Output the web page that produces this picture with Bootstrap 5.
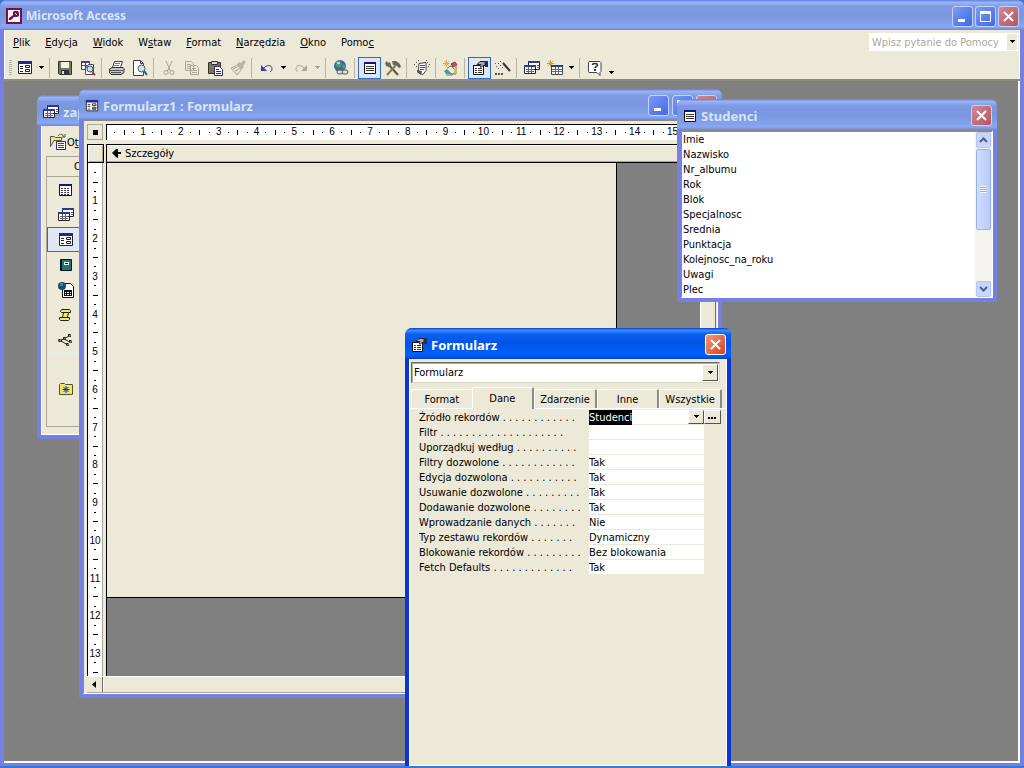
<!DOCTYPE html>
<html lang="pl">
<head>
<meta charset="utf-8">
<meta name="viewport" content="width=device-width, initial-scale=1">
<title>Microsoft Access</title>
<link href="https://cdn.jsdelivr.net/npm/bootstrap@5.3.0/dist/css/bootstrap.min.css" rel="stylesheet">
<style>
:root{--face:#ece9d8;--shade:#aca899;--desk:#808080}
body{font-family:"DejaVu Sans Condensed","DejaVu Sans",sans-serif;font-size:11px;line-height:15px;color:#000;background:#3a78d8;overflow:hidden;height:100vh}
svg{display:block;flex:none}
button,input,select{font:inherit;color:inherit;border-radius:0}
button{padding:0}
.win{background:var(--face);border:4px solid #7680e0;border-top:0;border-radius:7px 7px 0 0;box-shadow:inset 0 0 0 1px #fff}
.app{height:calc(100vh - 2px);border-bottom-width:3px}
.child{position:absolute;outline:0}
.bar{height:30px;margin:0 -4px;padding:2px 5px 0 6px;border-radius:7px 7px 0 0;color:#d8e4f8;font-family:"Noto Sans",sans-serif;font-weight:700;font-size:12px;line-height:18px;background:linear-gradient(#5f7fe0,#9bb5f4 8%,#7f9ae4 22%,#7a96df 50%,#81a1ea 78%,#8aa8f2 90%,#6f83dc)}
.bar.child-title{height:31px;font-size:13px}
.cap{width:21px;height:21px;border:1px solid #c5d3fa;border-radius:3px;background:linear-gradient(135deg,#7c9bf4,#3f6ae6)}
.cap.x{background:linear-gradient(135deg,#d08a94,#b4555f)}
.win.active{border-color:#0a35d6;box-shadow:inset 0 0 0 1px #fff}
.active .bar{color:#fff;background:linear-gradient(#0a3fd0,#3c8bff 8%,#0a5ff0 20%,#0055e5 50%,#0060fa 80%,#0058ee 92%,#0040c8)}
.active .cap.x{background:linear-gradient(135deg,#f0977c,#d8421c);border-color:#fff}
.menu{height:24px;padding:0 2px 0 9px}
.menu a{color:#000;text-decoration:none}
.menu nav{gap:15px}
.ask{height:18px;width:149px;background:#fff}
.ask input{border:0;padding:0 3px;background:#fff;min-width:0}
.ask input::placeholder{color:#aca899;opacity:1}
.ask button,.dd{border:0;background:var(--face);width:11px}
.ask button{margin:1px;width:10px}
.tools{height:27px;padding:2px 4px 0;border-bottom:2px solid #8c8a80}
.tb{width:23px;height:22px;border:1px solid transparent;background:transparent;display:flex;align-items:center;justify-content:center}
.tb.on{border-color:#316ac5;background:#dce6f4}
.dd{height:22px;display:flex;align-items:center;justify-content:center;background:transparent}
.sep{width:1px;height:20px;background:#b8b5a4;margin:0 3px 0 2px}
.grip{width:3px;height:15px;margin:0 1px;background:repeating-linear-gradient(#b5b2a2 0 1px,transparent 1px 2px)}
.mdi{background:var(--desk);border-right:2px solid #fff;border-bottom:2px solid #fff;overflow:hidden;min-height:0}
.db{left:33px;top:14px;width:400px;height:344px}
.design{left:75px;top:8px;width:643px;height:609px}
.fields{left:677px;top:99px;width:320px;height:203px}
.props{left:405px;top:328px;bottom:2px;width:326px;border-bottom:0}
.side{margin:2px 4px 8px 5px;width:120px;border:1px solid var(--shade)}
.side .hd{height:20px;border-bottom:1px solid var(--shade);padding-left:27px}
.side button{height:25px;width:100%;border:1px solid transparent;background:transparent;padding-left:10px;display:flex;align-items:center}
.side button.on{border-color:#316ac5;background:#dfe7f3}
.sheet{display:grid;grid-template-columns:19px 1fr 16px;grid-template-rows:20px 19px 1fr 17px;border:1px solid #8c8a80;border-right-color:#fff;border-bottom-color:#fff;padding:3px 1px 0 3px;overflow:hidden;min-height:0}
.corner{width:16px;height:16px;border:1px solid #fff;border-right-color:#55524a;border-bottom-color:#55524a;background:var(--face);outline:1px solid #aca899;outline-offset:-1px}
.rule-h,.rule-v{background:#fff;font-family:"Liberation Sans",sans-serif;font-size:10px;line-height:14px;overflow:hidden}
.rule-h{border-top:1px solid #000;border-left:1px solid #000;height:16px;padding-left:3px}
.rule-v{border-left:1px solid #000;width:16px;border-right:1px solid #aca899;padding-top:5px}
.rule-h .scale{display:grid;grid-template-columns:repeat(16,1fr);width:605px}
.rule-v .scale{display:grid;grid-template-rows:repeat(14,1fr);height:528px}
.rule-h .cm{display:grid;grid-template-columns:repeat(4,1fr);place-items:center;height:14px}
.rule-v .cm{display:grid;grid-template-rows:repeat(4,1fr);place-items:center}
.rule-v .cm span{line-height:9px}
.cm span{white-space:nowrap;width:0;display:flex;justify-content:center}
.cm i{background:#000;width:1px;height:1px}
.rule-v .cm i{width:2px}
.rule-h .cm i.mid{height:5px}
.rule-v .cm i.mid{width:5px}
.band{border:solid #000;border-width:1px 0 1px 1px;box-shadow:inset 0 -1px #aca899,inset 0 1px #fff;padding-left:5px;height:19px}
.pick{border:1px solid #000;width:17px;height:19px;background:var(--face);box-shadow:inset 1px 1px #fff,inset -1px -1px #aca899}
.area{background:var(--desk);border-left:1px solid #000;overflow:hidden}
.form-body{width:510px;height:435px;background:var(--face);border:solid #000;border-width:0 1px 1px 0}
.hs{border-top:1px solid #fff;border-bottom:1px solid #aca899;background:var(--face)}
.hs button{width:16px;border:0;border-right:1px solid #716f64;background:var(--face);box-shadow:1px 0 #fff}
.vs{border-left:1px solid #fff;border-right:1px solid #716f64;background:var(--face)}
.list{background:#fff;border:solid #8c8a80;border-width:2px 1px 1px 1px;border-right-color:#fff;border-bottom-color:#fff;min-height:0}
.list ul{padding:0 1px;overflow:hidden}
.sb{width:17px;background:#f4f3ee;padding:0 1px}
.sb button{height:16px;border:1px solid #b4c6f4;border-radius:2px;background:#c8d6fb;display:flex;align-items:center;justify-content:center}
.thumb{height:81px;margin:1px 0;border:1px solid #98b0ee;border-radius:2px;background:linear-gradient(90deg,#cfdcfe,#b9cbf9)}
.thumb i{width:7px;height:7px;background:repeating-linear-gradient(#eef4fe 0 1px,#8cb0f8 1px 2px)}
.combo{height:21px;margin:3px 7px 0 2px;background:#fff;border:1px solid #716f64;border-right-color:#d8d5c4;border-bottom-color:#d8d5c4;box-shadow:inset 1px 1px #aca899}
.combo select{appearance:none;border:0;background:transparent;padding:0 2px;width:100%;height:19px}
.combo span{position:absolute;right:1px;top:1px;width:16px;height:17px;pointer-events:none}
.knob{background:var(--face);border:1px solid #fff;border-right-color:#55524a;border-bottom-color:#55524a;display:flex;align-items:center;justify-content:center}
.tabs{height:26px;margin-bottom:1px;padding:0 5px 0 2px;border-bottom:1px solid #fff}
.tabs button{height:19px;flex:1 1 0;border:1px solid #fff;border-bottom:0;border-right:2px solid #8c8a80;border-radius:2px 2px 0 0;background:var(--face);text-align:center}
.tabs button.on{height:22px;margin-bottom:-1px}
.tabs button.first{border-right:0}
.prop{display:grid;grid-template-columns:170px 115px 17px;height:15px;padding-left:10px}
.prop label{white-space:pre;overflow:hidden;padding-right:3px;display:flex}
.prop .dots{overflow:hidden;flex:1}
.prop input{border:0;background:#fff;box-shadow:inset 0 -1px var(--face);padding:0;height:15px;line-height:15px;width:100%;min-width:0;outline:0}
.prop input::selection{background:#000;color:#fff}
.prop .knob{height:14px}
</style>
</head>
<body>
<svg width="0" height="0" class="position-absolute" aria-hidden="true" shape-rendering="crispEdges">
 <symbol id="key" viewBox="0 0 16 16"><path fill="#7b0f45" d="M0 0h16v16H0z"/><path fill="#fff" d="M2 2h12v12H2z"/><path fill="#7b0f45" d="M8 3h4l1 2v3l-2 1H8L5 12H3v-2l4-3V4z"/><path stroke="#fff" d="M9 5l2 2"/></symbol>
 <symbol id="form" viewBox="0 0 16 14"><path fill="#fff" stroke="#222" d="M1.500 1.500h13v11h-13z"/><path fill="#27278c" d="M1 0h14v3H1z"/><path stroke="#222" d="M3 5.500h3M3 7.500h3M3 10.500h3M9 10.500h3"/><path fill="none" stroke="#222" d="M8.500 4.500h4v2h-4zM8.500 8.500h4v2h-4z"/></symbol>
 <symbol id="save" viewBox="0 0 16 16"><path fill="#77785c" stroke="#333" d="M1.500 1.500h13v13h-12l-1-1z"/><path fill="#f1f1e4" d="M4 2h8v6H4z"/><path fill="#333" d="M4 10h8v5H4z"/><path fill="#ddd" d="M5 11h2v3H5z"/></symbol>
 <symbol id="find" viewBox="0 0 16 16"><path fill="#fff" stroke="#444" d="M1.500 1.500h8v8h-8z"/><path fill="#446" d="M1 1h9v2H1zM1 5h8v1H1zM5 2h1v8H5z"/><path fill="#fff" stroke="#445" d="M8.500 4.500h5v10h-8v-6z"/><circle cx="10" cy="9" r="3" fill="#b8e4f4" stroke="#355a7a"/><path stroke="#b33" stroke-width="2" d="M12 12l3 3"/></symbol>
 <symbol id="print" viewBox="0 0 16 16"><path fill="#fff" stroke="#444" d="M5.500 1.500h8l-2 6h-8z"/><path stroke="#777" d="M6 3.500h5M5 5.500h5"/><path fill="#c4c4b8" stroke="#333" d="M3 7.500h11l1 1v4l-3 2H2l-1.500-2V9z"/><path stroke="#555" d="M1 10.500h13M2 12.500h10"/><path fill="#ee0" d="M11 9h2v1h-2z"/></symbol>
 <symbol id="view" viewBox="0 0 16 16"><path fill="#fff" stroke="#444" d="M1.500.5h7l3 3v12h-10z"/><path fill="none" stroke="#444" d="M8.500.5v3h3"/><circle cx="9.500" cy="8.500" r="3.500" fill="#c8e6f0" stroke="#555"/><path stroke="#355a7a" stroke-width="2" d="M12 11l3 4"/></symbol>
 <symbol id="cut" viewBox="0 0 16 16"><path fill="none" stroke="#aaa798" d="M5 1l4.500 10M11 1L6.500 11M8 8v2"/><circle cx="5" cy="12.500" r="2" fill="none" stroke="#aaa798"/><circle cx="11" cy="12.500" r="2" fill="none" stroke="#aaa798"/></symbol>
 <symbol id="copy" viewBox="0 0 16 16"><path fill="#ece9d8" stroke="#aaa798" d="M1.500 1.500h6l2 2v7h-8zM6.500 5.500h6l2 2v7h-8z"/><path stroke="#aaa798" d="M3 4.500h4M3 6.500h3M3 8.500h3M8 8.500h4M8 10.500h5M8 12.500h5"/></symbol>
 <symbol id="paste" viewBox="0 0 16 16"><path fill="#7e784a" stroke="#333" d="M1.500 2.500h12v11h-12z"/><path fill="#ddd" stroke="#333" d="M4.500 1.500h6v3h-6z"/><path fill="#fff" stroke="#27278c" d="M7.500 6.500h5l3 3v6h-8z"/><path stroke="#27278c" d="M9 9.500h3M9 11.500h5M9 13.500h5"/></symbol>
 <symbol id="brush" viewBox="0 0 16 16"><path fill="#b9b6a6" d="M11 3l3-3 2 2-3 4 1 1-3 3-5-5 3-3z"/><path fill="none" stroke="#a5a293" d="M6 6L1 8l6 7 4-5M3 9l4-2M5 11l4-2"/></symbol>
 <symbol id="undo" viewBox="0 0 16 16"><path fill="#3a3a9c" d="M2 5v6h6z"/><path fill="none" stroke="#3a3a9c" d="M5 8c2-3 8-4 8 1 0 2-1 2-2 3"/></symbol>
 <symbol id="redo" viewBox="0 0 16 16"><path fill="#aaa798" d="M14 5v6H8z"/><path fill="none" stroke="#aaa798" d="M11 8C9 5 3 4 3 9c0 2 1 2 2 3"/></symbol>
 <symbol id="globe" viewBox="0 0 18 18"><circle cx="8" cy="7" r="6" fill="#3f689c"/><path fill="#4da07a" d="M4 3l4-1 2 3-3 4-3-2zM11 5l3 2-2 3-2-2z"/><path fill="#a8d6f0" d="M5 3h3v2H5z"/><rect x="5" y="11" width="6" height="4" rx="2" fill="#ddd" stroke="#555"/><rect x="10" y="11" width="6" height="4" rx="2" fill="#ddd" stroke="#555"/></symbol>
 <symbol id="fieldlist" viewBox="0 0 14 14"><path fill="#fff" stroke="#111" d="M1.500 1.500h11v11h-11z"/><path fill="#111a70" d="M1 1h12v2H1z"/><path stroke="#333" d="M3 5.500h8M3 7.500h8M3 9.500h8"/></symbol>
 <symbol id="hammer" viewBox="0 0 16 16"><path stroke="#5c5440" stroke-width="2" d="M3 4l10 11"/><path stroke="#8b7a4a" stroke-width="2" d="M11 5L2 15"/><path fill="#6a6a5a" d="M0 3l2-2 1 2 2-1 1 3-2 2-3-1zM7 1h4l4 3 1 3-2 1-3-3H8z"/></symbol>
 <symbol id="auto" viewBox="0 0 16 16"><path fill="#fff" stroke="#444" d="M5 3.500l7-1v8l-3 4-5-2z"/><path stroke="#555" d="M6 5.500h5M6 7.500h5M6 9.500h4"/><path fill="#555" d="M2 2h1v1H2zM0 4h1v1H0zM2 6h1v1H2zM4 0h1v1H4zM13 2h1v1h-1zM15 4h1v1h-1zM14 6h1v1h-1zM12 0h1v1h-1z"/><path fill="#555" d="M3 10l5 1-1 4-4-3z"/></symbol>
 <symbol id="code" viewBox="0 0 16 16"><path stroke="#d9b93c" d="M3.500 0v7M0 3.500h7M1 1l5 5M6 1L1 6"/><path fill="#c6504c" stroke="#933" d="M8 4l4-2 2 3-4 2z"/><path fill="#3b9eae" d="M4 9l5 5H3l-2-3z"/><path fill="none" stroke="#777" d="M4 8l4-2 5 5-4 4H3M13 3v11H7"/><path fill="#d8b850" d="M11 9h3v4h-3z"/></symbol>
 <symbol id="props" viewBox="0 0 16 16"><path fill="#fff" stroke="#111" d="M1.500 5.500h10v9h-10z"/><path fill="#111" d="M1 5h5v1H1z"/><path stroke="#333" d="M3 8.500h2M6 8.500h4M3 10.500h2M6 10.500h4M3 12.500h2M6 12.500h4"/><path fill="#a4acbc" stroke="#222" d="M5 4.500l3-3h5v4h-2l-2 2-1-2 1-1z"/><path fill="#222e66" d="M13 1h3v6h-3z"/></symbol>
 <symbol id="wand" viewBox="0 0 16 16"><path stroke="#333" stroke-width="2" d="M8 3l7 8"/><path fill="#555" d="M5 1h1v1H5zM3 3h1v1H3zM5 5h1v1H5zM1 6h1v1H1zM3 8h1v1H3zM7 7h1v1H7zM0 3h1v1H0zM0 13h2v2H0zM3 13h2v2H3zM6 13h2v2H6z"/></symbol>
 <symbol id="dbwin" viewBox="0 0 16 16"><path fill="#fff" stroke="#223" d="M4.500 1.500h11v8h-11zM.500 5.500h11v8H.500z"/><path fill="#2b3b90" d="M4 1h12v2H4zM0 5h12v2H0z"/><path stroke="#667" d="M2 9.500h8M2 11.500h8M4.500 7v6M7.500 7v6M13 5.500h2M13 7.500h2"/></symbol>
 <symbol id="newobj" viewBox="0 0 16 16"><path stroke="#c8a837" d="M3.500 0v7M0 3.500h7M1 1l5 5M6 1L1 6"/><path fill="#fff" stroke="#445" d="M4.500 6.500h11v8h-11z"/><path fill="#2b3b90" d="M4 5h12v2H4z"/><path stroke="#667" d="M5 9.500h10M5 11.500h10M8.500 7v7M11.500 7v7"/></symbol>
 <symbol id="help" viewBox="0 0 16 16"><path fill="#fff" stroke="#444" d="M2 1.500h11l1 1v9l-1 1v3l-3-3H2l-.500-1v-9z"/><path fill="none" stroke="#333" stroke-width="1.500" d="M5.500 5c0-2 5-2 5 0 0 1.500-2.500 1.500-2.500 3"/><path fill="#333" d="M7 9h2v2H7z"/></symbol>
 <symbol id="table" viewBox="0 0 16 14"><path fill="#fff" stroke="#111" d="M1.500 1.500h12v11h-12z"/><path fill="#111a70" d="M1 1h13v2H1z"/><path stroke="#445" stroke-dasharray="2 1" d="M3 5.500h9M3 7.500h9M3 9.500h9M3 11.500h9"/></symbol>
 <symbol id="report" viewBox="0 0 16 14"><path fill="#167a72" stroke="#111" d="M2.500 1.500h11v11h-11z"/><path fill="#fff" d="M6 4h5v3H6z"/><path stroke="#111" d="M7 5.500h3M3.500 1v12"/></symbol>
 <symbol id="page" viewBox="0 0 16 16"><path fill="#fff" stroke="#111" d="M4.500 1.500h8l3 3v11h-11z"/><circle cx="4" cy="4" r="4" fill="#1d4c74"/><path fill="#2f9a6a" d="M2 1h3v3H2z"/><path fill="#111" d="M6 8h8v6H6z"/><path fill="#fff" d="M7 10h1v1H7zM9 10h2v1H9zM12 10h1v1h-1zM7 12h1v1H7zM9 12h2v1H9zM12 12h1v1h-1z"/></symbol>
 <symbol id="macro" viewBox="0 0 14 14"><path fill="#efe668" stroke="#222" d="M3.500 1.500h8l1 1v2h-2l-1 5h2v2l-1 1h-8l-1-1v-2h3l1-5h-2l-1-1z"/><path stroke="#222" d="M4 4.500h6M4 9.500h6"/></symbol>
 <symbol id="module" viewBox="0 0 16 14"><path stroke="#222" d="M2 8l9-5M3 8l7 4M6 6l6 3"/><path fill="#6f9a5c" stroke="#111" stroke-dasharray="2 1" d="M10.500 1.500h2v2h-2zM11.500 7.500h2v2h-2zM8.500 10.500h2v2h-2zM5.500 4.500h2v2h-2zM.500 6.500h3v2h-3z"/></symbol>
 <symbol id="fav" viewBox="0 0 16 14"><path fill="#ece66c" stroke="#55522a" d="M1.500 2.500l1-1h4l1 1h7v10h-13z"/><path stroke="#1428d8" d="M8 4v7M4.500 7.500h7M5.500 5l5 5M10.500 5l-5 5"/></symbol>
 <symbol id="open" viewBox="0 0 18 18"><path fill="#efe872" stroke="#555" d="M1.500 3.500h4l1 1h6v3H5l-3.500 6z"/><path fill="none" stroke="#555" d="M9 3c2-3 5-2 6 1M13 4h3V1"/><path fill="#fff" stroke="#27278c" d="M7.500 8.500h9v8h-9z"/><path stroke="#445" d="M9 10.500h6M9 12.500h6M9 14.500h6"/></symbol>
 <symbol id="dn" viewBox="0 0 7 4"><path d="M1 0h5v1H1zM2 1h3v1H2zM3 2h1v1H3z"/></symbol>
 <symbol id="xx" viewBox="0 0 13 13"><path stroke="#fff" stroke-width="2" shape-rendering="auto" d="M2 2l9 9M11 2l-9 9"/></symbol>
 <symbol id="min" viewBox="0 0 13 13"><path fill="#fff" d="M2 9h7v3H2z"/></symbol>
 <symbol id="max" viewBox="0 0 13 13"><path fill="none" stroke="#fff" d="M1.500 1.500h10v10h-10z"/><path fill="#fff" d="M1 1h11v3H1z"/></symbol>
</svg>

<main class="win app d-flex flex-column">
 <header class="bar d-flex align-items-center flex-shrink-0">
  <svg width="16" height="16"><use href="#key"/></svg><span class="ms-1">Microsoft Access</span>
  <div class="ms-auto d-flex" style="gap:2px">
   <button class="cap" aria-label="Minimalizuj"><svg class="m-auto" width="13" height="13"><use href="#min"/></svg></button>
   <button class="cap" aria-label="Maksymalizuj"><svg class="m-auto" width="13" height="13"><use href="#max"/></svg></button>
   <button class="cap x" aria-label="Zamknij"><svg class="m-auto" width="13" height="13"><use href="#xx"/></svg></button>
  </div>
 </header>
 <div class="menu d-flex align-items-center flex-shrink-0">
  <nav class="d-flex">
   <a href="#"><u>P</u>lik</a><a href="#"><u>E</u>dycja</a><a href="#"><u>W</u>idok</a><a href="#">W<u>s</u>taw</a><a href="#"><u>F</u>ormat</a><a href="#"><u>N</u>arzędzia</a><a href="#"><u>O</u>kno</a><a href="#">Pomo<u>c</u></a>
  </nav>
  <div class="ask ms-auto d-flex"><input class="flex-fill" type="text" placeholder="Wpisz pytanie do Pomocy" aria-label="Pomoc"><button aria-label="Lista pytań"><svg class="m-auto" width="7" height="4"><use href="#dn"/></svg></button></div>
 </div>
 <div class="tools d-flex align-items-center flex-shrink-0" role="toolbar">
  <span class="grip"></span>
  <button class="tb" aria-label="Widok"><svg width="16" height="14"><use href="#form"/></svg></button><button class="dd" aria-label="Widoki"><svg width="7" height="4"><use href="#dn"/></svg></button>
  <span class="sep"></span>
  <button class="tb" aria-label="Zapisz"><svg width="16" height="16"><use href="#save"/></svg></button>
  <button class="tb" aria-label="Wyszukaj"><svg width="16" height="16"><use href="#find"/></svg></button>
  <span class="sep"></span>
  <button class="tb" aria-label="Drukuj"><svg width="16" height="16"><use href="#print"/></svg></button>
  <button class="tb" aria-label="Podgląd"><svg width="16" height="16"><use href="#view"/></svg></button>
  <span class="sep"></span>
  <button class="tb" aria-label="Wytnij"><svg width="16" height="16"><use href="#cut"/></svg></button>
  <button class="tb" aria-label="Kopiuj"><svg width="16" height="16"><use href="#copy"/></svg></button>
  <button class="tb" aria-label="Wklej"><svg width="16" height="16"><use href="#paste"/></svg></button>
  <button class="tb" aria-label="Malarz formatów"><svg width="16" height="16"><use href="#brush"/></svg></button>
  <span class="sep"></span>
  <button class="tb" aria-label="Cofnij"><svg width="16" height="16"><use href="#undo"/></svg></button><button class="dd" aria-label="Lista cofnięć"><svg width="7" height="4"><use href="#dn"/></svg></button>
  <button class="tb" aria-label="Ponów"><svg width="16" height="16"><use href="#redo"/></svg></button><button class="dd" aria-label="Lista ponowień"><svg width="7" height="4" fill="#aaa798"><use href="#dn"/></svg></button>
  <span class="sep"></span>
  <button class="tb" aria-label="Hiperłącze"><svg width="18" height="18"><use href="#globe"/></svg></button>
  <span class="sep"></span>
  <button class="tb on" aria-label="Lista pól"><svg width="14" height="14"><use href="#fieldlist"/></svg></button>
  <button class="tb" aria-label="Przybornik"><svg width="16" height="16"><use href="#hammer"/></svg></button>
  <span class="sep"></span>
  <button class="tb" aria-label="Autoformatowanie"><svg width="16" height="16"><use href="#auto"/></svg></button>
  <span class="sep"></span>
  <button class="tb" aria-label="Kod"><svg width="16" height="16"><use href="#code"/></svg></button>
  <span class="sep"></span>
  <button class="tb on" aria-label="Właściwości"><svg width="16" height="16"><use href="#props"/></svg></button>
  <button class="tb" aria-label="Konstruuj"><svg width="16" height="16"><use href="#wand"/></svg></button>
  <span class="sep"></span>
  <button class="tb" aria-label="Okno bazy danych"><svg width="16" height="16"><use href="#dbwin"/></svg></button>
  <button class="tb" aria-label="Nowy obiekt"><svg width="16" height="16"><use href="#newobj"/></svg></button><button class="dd" aria-label="Obiekty"><svg width="7" height="4"><use href="#dn"/></svg></button>
  <span class="sep"></span>
  <button class="tb" aria-label="Pomoc programu"><svg width="16" height="16"><use href="#help"/></svg></button><button class="dd align-items-end pb-1" aria-label="Opcje paska"><svg width="7" height="4"><use href="#dn"/></svg></button>
 </div>

 <div class="mdi flex-fill position-relative">
  <section class="win child db d-flex flex-column">
   <header class="bar child-title d-flex align-items-center flex-shrink-0"><svg width="16" height="16"><use href="#dbwin"/></svg><span class="ms-1">zap</span></header>
   <div class="d-flex align-items-center ps-2 pt-1" style="height:28px"><svg width="18" height="18"><use href="#open"/></svg><span>O<u>t</u>wórz</span></div>
   <div class="side flex-fill">
    <div class="hd d-flex align-items-center">Obiekty</div>
    <button aria-label="Tabele"><svg width="16" height="14"><use href="#table"/></svg></button>
    <button aria-label="Kwerendy"><svg width="16" height="16"><use href="#dbwin"/></svg></button>
    <button class="on" aria-label="Formularze"><svg width="16" height="14"><use href="#form"/></svg></button>
    <button aria-label="Raporty"><svg width="16" height="14"><use href="#report"/></svg></button>
    <button aria-label="Strony"><svg width="16" height="16"><use href="#page"/></svg></button>
    <button aria-label="Makra"><svg width="14" height="14"><use href="#macro"/></svg></button>
    <button aria-label="Moduły"><svg width="16" height="14"><use href="#module"/></svg></button>
    <div class="hd border-top border-secondary-subtle"></div>
    <button class="mt-1" aria-label="Ulubione"><svg width="16" height="14"><use href="#fav"/></svg></button>
   </div>
  </section>

  <section class="win child design d-flex flex-column">
   <header class="bar child-title d-flex align-items-center flex-shrink-0">
    <svg width="14" height="14"><use href="#form"/></svg><span class="ms-1">Formularz1 : Formularz</span>
    <div class="ms-auto d-flex" style="gap:3px">
     <button class="cap" aria-label="Minimalizuj"><svg class="m-auto" width="13" height="13"><use href="#min"/></svg></button>
     <button class="cap" aria-label="Maksymalizuj"><svg class="m-auto" width="13" height="13"><use href="#max"/></svg></button>
     <button class="cap x" aria-label="Zamknij"><svg class="m-auto" width="13" height="13"><use href="#xx"/></svg></button>
    </div>
   </header>
   <div class="sheet flex-fill">
    <div class="corner d-flex"><svg class="m-auto" width="5" height="5"><path d="M0 0h5v5H0z"/></svg></div>
    <div class="rule-h"><div class="scale" data-cm="15"></div></div>
    <div class="vs" style="grid-row:1/4;grid-column:3"></div>
    <div class="pick"></div>
    <div class="band d-flex align-items-center"><svg class="me-1" width="9" height="9"><path d="M4 0h2v3h3v2H6v4L4 8 0 4z"/></svg>Szczegóły</div>
    <div class="rule-v"><div class="scale" data-cm="13"></div></div>
    <div class="area"><div class="form-body"></div></div>
    <div class="hs d-flex" style="grid-column:1/4"><button aria-label="Przewiń w lewo"><svg class="m-auto" width="5" height="7"><path d="M4 0v7L0 3.500z"/></svg></button></div>
   </div>
  </section>
 </div>
</main>

<section class="win child fields d-flex flex-column">
 <header class="bar child-title d-flex align-items-center flex-shrink-0">
  <svg width="14" height="14"><use href="#fieldlist"/></svg><span class="ms-1">Studenci</span>
  <button class="cap x ms-auto" aria-label="Zamknij"><svg class="m-auto" width="13" height="13"><use href="#xx"/></svg></button>
 </header>
 <div class="list flex-fill d-flex">
  <ul class="list-unstyled mb-0 flex-fill"><li>Imie</li><li>Nazwisko</li><li>Nr_albumu</li><li>Rok</li><li>Blok</li><li>Specjalnosc</li><li>Srednia</li><li>Punktacja</li><li>Kolejnosc_na_roku</li><li>Uwagi</li><li>Plec</li></ul>
  <div class="sb d-flex flex-column">
   <button aria-label="W górę"><svg width="9" height="6"><path fill="none" stroke="#4d6185" stroke-width="2" d="M1 5l3.500-3.500L8 5"/></svg></button>
   <div class="thumb d-flex"><i class="m-auto"></i></div>
   <button class="mt-auto" aria-label="W dół"><svg width="9" height="6"><path fill="none" stroke="#4d6185" stroke-width="2" d="M1 1l3.500 3.500L8 1"/></svg></button>
  </div>
 </div>
</section>

<section class="win active child props">
 <header class="bar child-title d-flex align-items-center">
  <svg width="16" height="16"><use href="#props"/></svg><span class="ms-1">Formularz</span>
  <button class="cap x ms-auto" aria-label="Zamknij"><svg class="m-auto" width="13" height="13"><use href="#xx"/></svg></button>
 </header>
 <div class="combo position-relative"><select aria-label="Obiekt"><option>Formularz</option></select><span class="knob"><svg width="7" height="4"><use href="#dn"/></svg></span></div>
 <div class="tabs d-flex align-items-end" role="tablist"><button class="first" role="tab">Format</button><button class="on" role="tab">Dane</button><button role="tab">Zdarzenie</button><button role="tab">Inne</button><button role="tab">Wszystkie</button></div>
 <div class="prop"><label for="p1">Źródło rekordów<span class="dots"> . . . . . . . . . . . .</span></label><div class="d-flex"><input id="p1" value="Studenci"><button class="knob flex-shrink-0" style="width:16px" aria-label="Lista źródeł"><svg width="7" height="4"><use href="#dn"/></svg></button></div><button class="knob" aria-label="Konstruuj źródło"><svg width="9" height="4"><path d="M0 2h2v2H0zM3 2h2v2H3zM6 2h2v2H6z"/></svg></button></div>
 <div class="prop"><label for="p2">Filtr<span class="dots"> . . . . . . . . . . . . . . . . . . . .</span></label><input id="p2"></div>
 <div class="prop"><label for="p3">Uporządkuj według<span class="dots"> . . . . . . . . . .</span></label><input id="p3"></div>
 <div class="prop"><label for="p4">Filtry dozwolone<span class="dots"> . . . . . . . . . . . .</span></label><input id="p4" value="Tak"></div>
 <div class="prop"><label for="p5">Edycja dozwolona<span class="dots"> . . . . . . . . . . .</span></label><input id="p5" value="Tak"></div>
 <div class="prop"><label for="p6">Usuwanie dozwolone<span class="dots"> . . . . . . . . .</span></label><input id="p6" value="Tak"></div>
 <div class="prop"><label for="p7">Dodawanie dozwolone<span class="dots"> . . . . . . . .</span></label><input id="p7" value="Tak"></div>
 <div class="prop"><label for="p8">Wprowadzanie danych<span class="dots"> . . . . . . .</span></label><input id="p8" value="Nie"></div>
 <div class="prop"><label for="p9">Typ zestawu rekordów<span class="dots"> . . . . . . .</span></label><input id="p9" value="Dynamiczny"></div>
 <div class="prop"><label for="p10">Blokowanie rekordów<span class="dots"> . . . . . . . . .</span></label><input id="p10" value="Bez blokowania"></div>
 <div class="prop"><label for="p11">Fetch Defaults<span class="dots"> . . . . . . . . . . . . .</span></label><input id="p11" value="Tak"></div>
</section>

<script src="https://cdn.jsdelivr.net/npm/bootstrap@5.3.0/dist/js/bootstrap.bundle.min.js"></script>
<script>
// One ruler cell per centimetre: quarter, half and three-quarter ticks, then the number.
// The last, partly visible centimetre has ticks only.
document.querySelectorAll('.scale').forEach(function (s) {
  var last = +s.dataset.cm;
  for (var n = 1; n <= last + 1; n++) {
    s.insertAdjacentHTML('beforeend', '<div class="cm"><i></i><i class="mid"></i><i></i>' + (n > last ? '' : '<span>' + n + '</span>') + '</div>');
  }
});
document.getElementById('p1').select();
</script>
</body>
</html>
